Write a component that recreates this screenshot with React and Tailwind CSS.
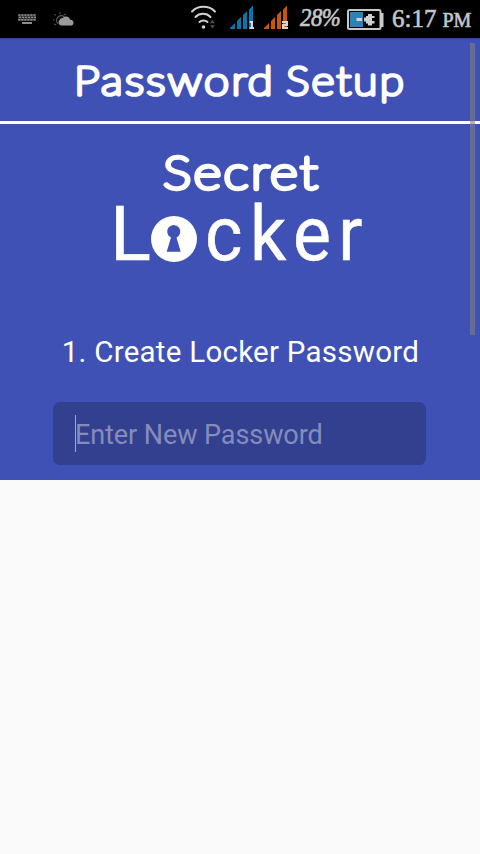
function RoundedWord({ x, y, size, length, stroke, children }) {
  return (
    <text
      x={x}
      y={y}
      fontSize={size}
      textLength={length}
      lengthAdjust="spacingAndGlyphs"
      strokeWidth={stroke}
      strokeLinejoin="round"
      strokeLinecap="round"
      className="fill-white stroke-white font-['Lato',sans-serif] font-thin tracking-[2px]"
    >
      {children}
    </text>
  );
}

function KeyboardIcon() {
  return (
    <svg width="19" height="11" viewBox="0 0 19 11" fill="#8c8c8c">
      <path d="M0 0h18v7H0z" fill="#303030" />
      {[0, 3, 6, 9, 12, 15].map((x) => (
        <g key={x}>
          <rect x={x + 0.3} y="0.3" width="2.1" height="1.5" />
          <rect x={x + 1} y="2.7" width="2" height="1.4" />
          <rect x={x + 0.3} y="5" width="2.2" height="1.5" />
        </g>
      ))}
      <rect x="4" y="8" width="10" height="2" />
    </svg>
  );
}

function WeatherIcon() {
  return (
    <svg width="22" height="15" viewBox="0 0 22 15">
      <g fill="none" stroke="#666" strokeWidth="1.1">
        <path d="M5 11.5A4.4 4.4 0 1 1 11.5 5" />
        <path d="M7 .3v1.4M1.6 2.4l1 1M0 8h1.4M1.6 13l1-1M12.4 2l-1 1" />
      </g>
      <path d="M8.5 13.5a3.2 3.2 0 0 1-2-5.500A3 3 0 0 1 9.5 6a4.5 4.5 0 0 1 7.7 1.7A3 3 0 0 1 18.500 13.5z" fill="#9a9a9a" />
    </svg>
  );
}

function WifiIcon() {
  return (
    <svg width="27" height="25" viewBox="0 0 27 25">
      <g fill="none" stroke="#d0d0d0" strokeWidth="2" strokeLinecap="round">
        <path d="M2 6.5C8 .3 19 .3 25 6.5" />
        <path d="M5.5 12c4-4.2 11-4.2 15 0" />
        <path d="M9.5 17c2-2 6-2 8 0" />
      </g>
      <circle cx="13.5" cy="22" r="1.8" fill="#d0d0d0" />
      <path d="M20 18.2l2.4-3.4 2.4 3.4zM20 20.2l2.4 3.4 2.4-3.4z" fill="#505050" />
    </svg>
  );
}

function SignalIcon({ color, sim }) {
  return (
    <svg width="26" height="25" viewBox="0 0 26 25">
      <path d="M-1 23l6-6V23zM7 15l4-4v12H7zM13 9l4-4v18h-4zM19 3.5l4-4V23h-4z" fill={color} />
      {sim === 1 ? (
        <path d="M19.5 15h3.5v6h1v2h-4.5v-2H21v-4h-1.5z" fill="#d6d6d6" />
      ) : (
        <path d="M18 15h6v5h-3.5v1H24v2h-6v-5h3.7v-1H18z" fill="#d6d6d6" />
      )}
    </svg>
  );
}

function BatteryIcon() {
  return (
    <svg width="37" height="21" viewBox="0 0 37 21">
      <rect x="1" y="1" width="32.5" height="19" rx="1.5" fill="none" stroke="#c9c9c9" strokeWidth="2" />
      <rect x="34" y="4" width="2.5" height="14" fill="#c9c9c9" />
      <rect x="3" y="3" width="13" height="15" fill="#2f80b4" />
      <path d="M9.5 9H15v3H9.5zM17 8.500h2V7h2V5h4v2h2.5v2H25v3h2.5v2.5H25v2h-4v-2h-2V12.500h-2z" fill="#d0d0d0" />
    </svg>
  );
}

function StatusBar() {
  return (
    <header className="flex h-[38px] bg-black font-['Liberation_Serif',serif] text-[#c6c6c6]">
      <div className="mt-[14px] ml-[18px] w-[35px]"><KeyboardIcon /></div>
      <div className="mt-3 w-[137px]"><WeatherIcon /></div>
      <div className="mt-[5px] w-10"><WifiIcon /></div>
      <div className="mt-[6px] w-[34px]"><SignalIcon color="#0877ad" sim={1} /></div>
      <div className="mt-[6px] w-9"><SignalIcon color="#c6570c" sim={2} /></div>
      <div className="w-[47px] text-[25px] leading-[36px] tracking-[-0.5px] italic [-webkit-text-stroke:0.7px_#c6c6c6]">
        <span className="inline-block origin-left scale-x-[0.91]">28%</span>
      </div>
      <div className="mt-[9px] w-[45px]"><BatteryIcon /></div>
      <div className="text-[25px] leading-[37px] whitespace-nowrap [-webkit-text-stroke:0.6px_#c6c6c6]">
        6:17<span className="ml-1.5 text-[20px]">PM</span>
      </div>
    </header>
  );
}

function Logo() {
  return (
    <div className="flex h-[166px] flex-col items-center pt-[10px]">
      <svg className="shrink-0" width="176" height="68" viewBox="0 0 176 68">
        <RoundedWord x="11" y="54.5" size="46" length="157" stroke="4.4">Secret</RoundedWord>
      </svg>
      <div className="-mt-[7px] flex h-[76px] w-[248px] items-start text-[76px] leading-[78px] text-white [-webkit-text-stroke:0.5px_white]">
        <span className="-ml-[6px] w-[42px]">L</span>
        <svg className="mt-[21px] shrink-0" width="46" height="46" viewBox="0 0 46 46">
          <circle cx="23" cy="23" r="23" fill="white" />
          <path d="M20 21.5a6.6 6.6 0 1 1 5.5 0l4.2 14.2h-14z" fill="#3f51b5" />
        </svg>
        <span className="ml-2 origin-left scale-x-[0.94] tracking-[8px]">cker</span>
      </div>
    </div>
  );
}

export default function App() {
  return (
    <main className="h-[854px] w-[480px] overflow-hidden bg-[#fafafa] font-['Roboto',sans-serif]">
      <StatusBar />
      <section className="relative h-[442px] bg-[#3f51b5] shadow-[inset_0_2px_2px_-1px_#00000033]">
        <h1 className="flex h-[86px] justify-center border-b-[3px] border-white">
          <svg width="340" height="80" viewBox="0 0 340 80">
            <RoundedWord x="4" y="56.5" size="39.5" length="201" stroke="3.7">Password</RoundedWord>
            <RoundedWord x="216" y="56.5" size="39.5" length="120" stroke="3.7">Setup</RoundedWord>
          </svg>
        </h1>
        <Logo />
        <h2 className="mt-[41px] pl-px text-center text-[29.5px] leading-[43px] tracking-[0.26px] whitespace-nowrap text-white">
          1. Create Locker Password
        </h2>
        <div className="mt-7 ml-[53px] flex h-[63px] w-[373px] items-center rounded-[7px] bg-[#33408f] pl-[22px]">
          <span className="h-[37px] w-px bg-[#9ca5d2]" />
          <span className="-ml-px pt-0.5 text-[27px] leading-[38px] tracking-[-0.08px] whitespace-nowrap text-[#858cbc]">Enter New Password</span>
        </div>
        <div className="absolute top-[5px] right-[5px] h-[292px] w-[5px] bg-[#808080]/60" />
      </section>
    </main>
  );
}
